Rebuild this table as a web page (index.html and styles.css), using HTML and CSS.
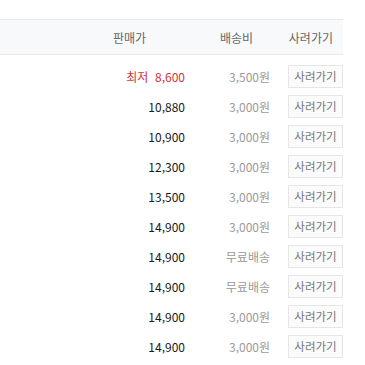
FILE: index.html
```html
<!DOCTYPE html>
<html lang="ko">
<head>
<meta charset="utf-8">
<link rel="stylesheet" href="styles.css">
</head>
<body>
<div class="table">
  <div class="head">
    <span class="hcell">판매가</span>
    <span class="hcell">배송비</span>
    <span class="hcell">사려가기</span>
  </div>
  <div class="rows">
    <div class="row"><span></span><span class="price low">최저&nbsp; 8,600</span><span class="ship">3,500원</span><span></span><span class="btn">사려가기</span></div>
    <div class="row"><span></span><span class="price">10,880</span><span class="ship">3,000원</span><span></span><span class="btn">사려가기</span></div>
    <div class="row"><span></span><span class="price">10,900</span><span class="ship">3,000원</span><span></span><span class="btn">사려가기</span></div>
    <div class="row"><span></span><span class="price">12,300</span><span class="ship">3,000원</span><span></span><span class="btn">사려가기</span></div>
    <div class="row"><span></span><span class="price">13,500</span><span class="ship">3,000원</span><span></span><span class="btn">사려가기</span></div>
    <div class="row"><span></span><span class="price">14,900</span><span class="ship">3,000원</span><span></span><span class="btn">사려가기</span></div>
    <div class="row"><span></span><span class="price">14,900</span><span class="ship">무료배송</span><span></span><span class="btn">사려가기</span></div>
    <div class="row"><span></span><span class="price">14,900</span><span class="ship">무료배송</span><span></span><span class="btn">사려가기</span></div>
    <div class="row"><span></span><span class="price">14,900</span><span class="ship">3,000원</span><span></span><span class="btn">사려가기</span></div>
    <div class="row"><span></span><span class="price">14,900</span><span class="ship">3,000원</span><span></span><span class="btn">사려가기</span></div>
  </div>
</div>
</body>
</html>
```
FILE: styles.css
```css
html, body {
  margin: 0;
  padding: 0;
  background: #fff;
}
body {
  font-family: "Noto Sans CJK KR", "Noto Sans", sans-serif;
  font-size: 12px;
  color: #000;
}
.table {
  width: 343px;
  padding-top: 19px;
}
.head {
  display: grid;
  grid-template-columns: 146px 107px 80px;
  height: 34px;
  align-items: center;
  background: #f8f9fb;
  border-top: 1px solid #e9eaec;
  border-bottom: 1px solid #e9eaec;
  padding-right: 10px;
  color: #666;
  font-size: 12px;
}
.hcell { text-align: right; }
.rows {
  padding-top: 6px;
}
.row {
  display: grid;
  grid-template-columns: 100px 85px 85px 18px 55px;
  height: 30px;
  align-items: center;
}
.price {
  text-align: right;
  color: #1a1a1a;
}
.price.low {
  color: #d0343a;
}
.ship {
  text-align: right;
  color: #9a9a9a;
}
.btn {
  box-sizing: border-box;
  height: 23px;
  line-height: 21px;
  border: 1px solid #e6e6e6;
  background: #fbfbfb;
  color: #777;
  text-align: center;
  font-size: 11.5px;
}
```
